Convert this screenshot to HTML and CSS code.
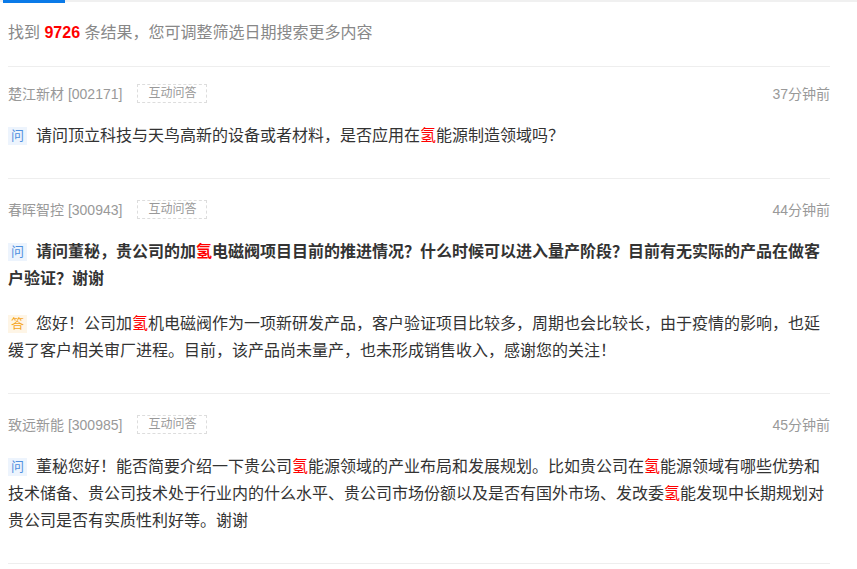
FILE: index.html
```html
<!DOCTYPE html>
<html lang="zh-CN">
<head>
    <meta charset="UTF-8">
    <meta name="viewport" content="width=device-width, initial-scale=1.0">
    <title>互动问答搜索</title>
    <link rel="stylesheet" href="styles.css">
</head>
<body>
    <div class="tabs">
        <span class="tab-active"></span>
    </div>

    <div class="lista">
        <div class="resumen">
            找到 <b class="numero">9726</b> 条结果，您可调整筛选日期搜索更多内容
        </div>

        <div class="item">
            <div class="cabecera">
                <span class="empresa">楚江新材 [002171]</span>
                <span class="etiqueta">互动问答</span>
                <span class="tiempo">37分钟前</span>
            </div>
            <p class="texto"><span class="marca pregunta">问</span>请问顶立科技与天鸟高新的设备或者材料，是否应用在<em>氢</em>能源制造领域吗？</p>
        </div>

        <div class="item">
            <div class="cabecera">
                <span class="empresa">春晖智控 [300943]</span>
                <span class="etiqueta">互动问答</span>
                <span class="tiempo">44分钟前</span>
            </div>
            <p class="texto negrita"><span class="marca pregunta">问</span>请问董秘，贵公司的加<em>氢</em>电磁阀项目目前的推进情况？什么时候可以进入量产阶段？目前有无实际的产品在做客户验证？谢谢</p>
            <p class="texto respuesta-texto"><span class="marca respuesta">答</span>您好！公司加<em>氢</em>机电磁阀作为一项新研发产品，客户验证项目比较多，周期也会比较长，由于疫情的影响，也延缓了客户相关审厂进程。目前，该产品尚未量产，也未形成销售收入，感谢您的关注！</p>
        </div>

        <div class="item">
            <div class="cabecera">
                <span class="empresa">致远新能 [300985]</span>
                <span class="etiqueta">互动问答</span>
                <span class="tiempo">45分钟前</span>
            </div>
            <p class="texto"><span class="marca pregunta">问</span>董秘您好！能否简要介绍一下贵公司<em>氢</em>能源领域的产业布局和发展规划。比如贵公司在<em>氢</em>能源领域有哪些优势和技术储备、贵公司技术处于行业内的什么水平、贵公司市场份额以及是否有国外市场、发改委<em>氢</em>能发现中长期规划对贵公司是否有实质性利好等。谢谢</p>
        </div>
    </div>
</body>
</html>
```

FILE: styles.css
```css
body {
    margin: 0;
    background-color: #fff;
    font-family: "Liberation Sans", Arial, "Noto Sans CJK SC", sans-serif;
    color: #333;
}

.tabs {
    display: flex;
    height: 3px;
    background: linear-gradient(#f0f0f0 0 2px, transparent 2px);
}

.tab-active {
    width: 62px;
    margin-left: 3px;
    background-color: #0a7ae8;
}

.lista {
    width: 822px;
    padding-left: 8px;
}

.resumen {
    font-size: 16px;
    line-height: 20px;
    color: #888;
    padding: 20px 0 23px;
    border-bottom: 1px solid #eee;
}

.numero {
    color: #f00;
    font-size: 16px;
}

.item {
    padding: 20px 0 29px;
    border-bottom: 1px solid #eee;
}

.resumen + .item {
    padding-top: 16px;
}

.cabecera {
    display: flex;
    align-items: center;
    height: 20px;
    font-size: 14px;
    color: #999;
}

.etiqueta {
    margin-left: 15px;
    height: 17px;
    line-height: 17px;
    padding: 0 10px;
    border: 1px dashed #ddd;
    font-size: 12px;
    color: #999;
}

.tiempo {
    margin-left: auto;
}

.texto {
    margin: 19px 0 0;
    font-size: 16px;
    line-height: 27px;
    color: #333;
}

.respuesta-texto {
    margin-top: 18px;
}

.negrita {
    font-weight: bold;
}

.texto em {
    font-style: normal;
    color: #f00;
}

.marca {
    display: inline-block;
    width: 19px;
    height: 18px;
    line-height: 18px;
    margin-right: 9px;
    text-align: center;
    font-size: 13px;
    font-weight: normal;
    vertical-align: 1px;
}

.pregunta {
    background-color: #edf4fd;
    color: #4f8fdf;
}

.respuesta {
    background-color: #fef5e6;
    color: #f5a623;
}
```
